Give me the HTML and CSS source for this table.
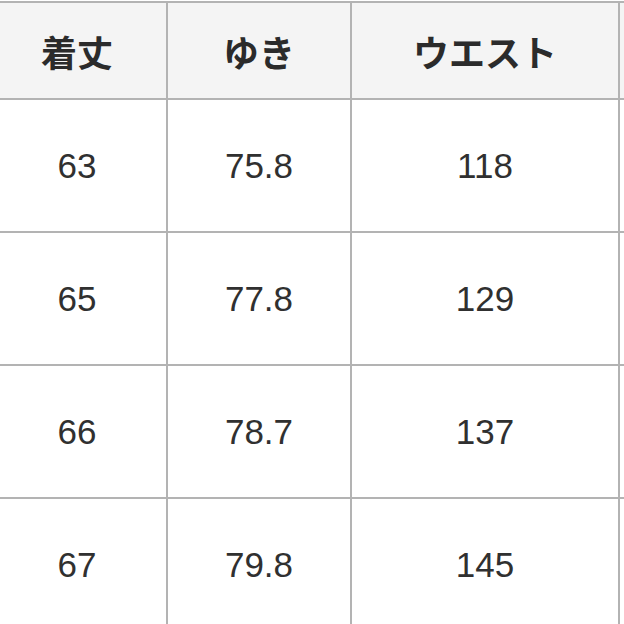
FILE: index.html
```html
<!DOCTYPE html>
<html lang="ja">
<head>
<meta charset="utf-8">
<link rel="stylesheet" href="styles.css">
</head>
<body>
<table class="size-table">
  <thead>
    <tr>
      <th class="c1">着丈</th>
      <th class="c2">ゆき</th>
      <th class="c3">ウエスト</th>
      <th class="c4"></th>
    </tr>
  </thead>
  <tbody>
    <tr><td>63</td><td>75.8</td><td>118</td><td></td></tr>
    <tr><td>65</td><td>77.8</td><td>129</td><td></td></tr>
    <tr><td>66</td><td>78.7</td><td>137</td><td></td></tr>
    <tr><td>67</td><td>79.8</td><td>145</td><td></td></tr>
  </tbody>
</table>
</body>
</html>
```
FILE: styles.css
```css
html, body {
  margin: 0;
  padding: 0;
  background: #ffffff;
  overflow: hidden;
}
body {
  width: 624px;
  height: 624px;
}
.size-table {
  border-collapse: collapse;
  table-layout: fixed;
  margin-left: -14px;
  margin-top: 1px;
  width: 760px;
  font-family: "Liberation Sans", Arial, "Noto Sans CJK JP", sans-serif;
  color: #303030;
}
.size-table th,
.size-table td {
  border: 2px solid #b3b3b3;
  text-align: center;
  vertical-align: middle;
  padding: 0;
}
.size-table th {
  background: #f4f4f4;
  height: 95px;
  font-family: "Noto Sans CJK JP", sans-serif;
  font-weight: 700;
  font-size: 36px;
  color: #2b2b2b;
}
.size-table td {
  height: 131px;
  font-size: 35px;
}
.c1 { width: 178px; }
.c2 { width: 182px; }
.c3 { width: 266px; }
.c4 { width: 134px; }
```
